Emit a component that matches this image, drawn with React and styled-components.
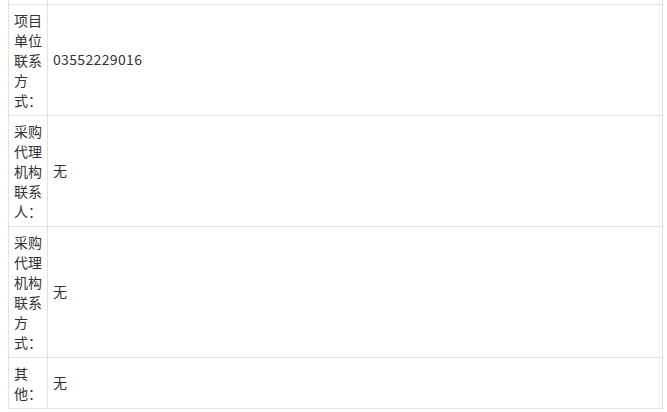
import React from "react";
import styled, { createGlobalStyle } from "styled-components";

const Global = createGlobalStyle`
  html, body { margin: 0; padding: 0; background: #fff; }
  body {
    font-family: "Noto Sans CJK SC", "Microsoft YaHei", sans-serif;
    color: #333;
  }
`;

const Page = styled.div`
  padding: 0 4px 0 8px;
`;

const Table = styled.div`
  display: flex;
  flex-direction: column;
  border-left: 1px solid #e2e2e2;
  border-right: 1px solid #dcdcdc;
`;

const Row = styled.div`
  display: flex;
  border-bottom: 1px solid #e2e2e2;
  height: ${(p) => p.$h}px;
`;

const Label = styled.div`
  width: 39px;
  flex: none;
  box-sizing: border-box;
  padding: 5px 4px 5px 5px;
  border-right: 1px solid #e2e2e2;
  font-size: 14px;
  line-height: 20px;
  color: #333;
  word-break: break-all;
`;

const Value = styled.div`
  flex: 1;
  display: flex;
  align-items: center;
  padding: 0 5px 2px;
  margin-right: 2px;
  border-right: 1px solid #f0f0f0;
  font-size: 14px;
  line-height: 20px;
  letter-spacing: 0.35px;
  color: #333;
`;

const rows = [
  { label: "项目单位联系方式：", value: "03552229016", h: 110 },
  { label: "采购代理机构联系人：", value: "无", h: 110 },
  { label: "采购代理机构联系方式：", value: "无", h: 130 },
  { label: "其他：", value: "无", h: 50 },
];

export default function App() {
  return (
    <Page>
      <Global />
      <Table>
        <Row $h={4}>
          <Label />
          <Value />
        </Row>
        {rows.map((r, i) => (
          <Row key={i} $h={r.h}>
            <Label>{r.label}</Label>
            <Value>{r.value}</Value>
          </Row>
        ))}
      </Table>
    </Page>
  );
}
